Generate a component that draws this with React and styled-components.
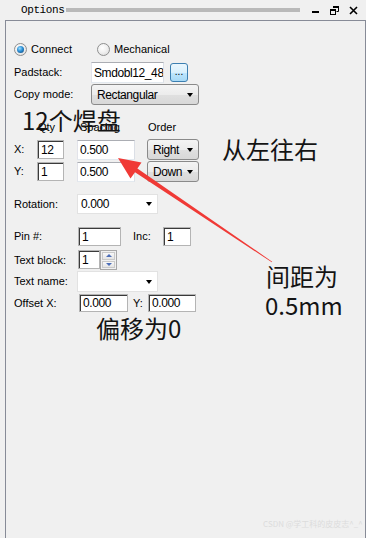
import React from "react";
import styled, { createGlobalStyle, css } from "styled-components";

const GlobalStyle = createGlobalStyle`
  html, body {
    margin: 0;
    padding: 0;
    background: #f0f0f0;
  }
  body {
    font-family: "Liberation Sans", Arial, sans-serif;
    font-size: 11px;
    color: #000;
  }
`;

const Window = styled.div`
  position: relative;
  width: 366px;
  height: 538px;
  overflow: hidden;
  background: #f0f0f0;
  display: flex;
  flex-direction: column;
`;

/* title bar */
const TitleBar = styled.div`
  height: 20px;
  flex: none;
  display: flex;
  align-items: center;
  padding-left: 21px;
  box-sizing: border-box;
`;

const Title = styled.span`
  font-family: "Liberation Mono", "Courier New", monospace;
  font-size: 11px;
  letter-spacing: -0.4px;
  line-height: 1;
`;

const Grip = styled.div`
  width: 234px;
  height: 4px;
  margin-left: 2px;
  background: #b9b9b9;
`;

const WinButtons = styled.div`
  display: flex;
  align-items: center;
  gap: 10px;
  margin-left: 12px;
  svg {
    display: block;
  }
`;

/* options panel */
const Panel = styled.div`
  flex: 1;
  width: 361px;
  margin-left: 5px;
  box-sizing: border-box;
  border: 1px solid #878b97;
  border-bottom: none;
  padding: 19px 8px 0 8px;
`;

const Row = styled.div`
  display: flex;
  align-items: ${(p) => (p.$top ? "flex-start" : "center")};
  height: ${(p) => p.$h}px;
  margin-top: ${(p) => p.$mt || 0}px;
`;

const Label = styled.span`
  flex: none;
  width: ${(p) => p.$w}px;
  margin-left: ${(p) => p.$ml || 0}px;
  align-self: center;
  white-space: nowrap;
  line-height: 1;
`;

const RadioItem = styled.label`
  display: flex;
  align-items: center;
  gap: 4px;
  width: ${(p) => p.$w}px;
  flex: none;
`;

const RadioDot = styled.span`
  width: 13px;
  height: 13px;
  box-sizing: border-box;
  border-radius: 50%;
  border: 1px solid #8e8f8f;
  background: radial-gradient(circle at 40% 35%, #ffffff 0%, #f1f1f1 45%, #d6d6d6 100%);
  display: flex;
  align-items: center;
  justify-content: center;
  ${(p) =>
    p.$on &&
    css`
      &::after {
        content: "";
        width: 7px;
        height: 7px;
        border-radius: 50%;
        background: radial-gradient(circle at 40% 35%, #9fe0ff 0%, #2b8fd6 45%, #0d3c6b 100%);
      }
    `}
`;

const TextBox = styled.div`
  flex: none;
  box-sizing: border-box;
  width: ${(p) => p.$w}px;
  height: ${(p) => p.$h}px;
  margin-left: ${(p) => p.$ml || 0}px;
  background: #fff;
  display: flex;
  align-items: center;
  padding-left: 2px;
  overflow: hidden;
  white-space: nowrap;
  font-size: 12px;
  letter-spacing: -0.4px;
  ${(p) =>
    p.$sunken
      ? css`
          border: 1px solid #b4b4b4;
          box-shadow: inset 1px 1px 0 #3a3a3a;
          padding-left: 3px;
        `
      : css`
          border: 1px solid;
          border-color: #abadb3 #dbdfe6 #e3e9ef #e2e3ea;
        `}
`;

const BrowseButton = styled.div`
  flex: none;
  width: 18px;
  height: 19px;
  margin-left: 6px;
  box-sizing: border-box;
  border: 1px solid #3c7fb1;
  border-radius: 3px;
  background: linear-gradient(#eaf6fd 0%, #d9f0fc 50%, #bee6fd 51%, #a7d9f5 100%);
  display: flex;
  align-items: flex-end;
  justify-content: center;
  padding-bottom: 4px;
  font-size: 10px;
  line-height: 1;
`;

const Caret = styled.span`
  flex: none;
  width: 0;
  height: 0;
  border-left: 3.5px solid transparent;
  border-right: 3.5px solid transparent;
  border-top: 4px solid #000;
`;

const Select = styled.div`
  flex: none;
  box-sizing: border-box;
  width: ${(p) => p.$w}px;
  height: ${(p) => p.$h}px;
  margin-left: ${(p) => p.$ml || 0}px;
  display: flex;
  align-items: center;
  justify-content: space-between;
  padding: 0 5px 0 ${(p) => (p.$button ? 5 : 3)}px;
  font-size: 12px;
  letter-spacing: -0.4px;
  ${(p) =>
    p.$button
      ? css`
          border: 1px solid #8a8a8a;
          border-radius: 3px;
          background: linear-gradient(#f4f4f4 0%, #ececec 50%, #e0e0e0 51%, #d8d8d8 100%);
        `
      : css`
          border: 1px solid #e2e2e2;
          background: #fff;
        `}
`;

const Spinner = styled.div`
  flex: none;
  width: 17px;
  height: 20px;
  box-sizing: border-box;
  border: 1px solid #a7a7a7;
  background: #f0f0f0;
  display: flex;
  flex-direction: column;
  gap: 1px;
  padding: 1px;
`;

const SpinButton = styled.div`
  flex: 1;
  border: 1px solid #c9c9c9;
  background: linear-gradient(#f8f8f8, #e4e4e4);
  display: flex;
  align-items: center;
  justify-content: center;
  &::after {
    content: "";
    border-left: 3px solid transparent;
    border-right: 3px solid transparent;
    ${(p) =>
      p.$up
        ? css`
            border-bottom: 3px solid #4b6db7;
          `
        : css`
            border-top: 3px solid #4b6db7;
          `}
  }
`;

/* annotations drawn on top of the screenshot */
const Note = styled.span`
  position: absolute;
  left: ${(p) => p.$x}px;
  top: ${(p) => p.$y}px;
  font-family: "Noto Sans CJK SC", "Noto Sans", sans-serif;
  font-size: 24px;
  line-height: 30px;
  color: #141414;
  white-space: nowrap;
`;

const ArrowLayer = styled.svg`
  position: absolute;
  left: 0;
  top: 0;
  pointer-events: none;
`;

const Watermark = styled.span`
  position: absolute;
  left: 263px;
  top: 518px;
  font-family: "Noto Sans CJK SC", "Liberation Sans", sans-serif;
  font-size: 8px;
  color: #dcdcdc;
  white-space: nowrap;
`;

const App = () => {
  return (
    <Window>
      <GlobalStyle />
      <TitleBar>
        <Title>Options</Title>
        <Grip />
        <WinButtons>
          <svg width="8" height="8" viewBox="0 0 8 8">
            <rect x="0" y="5" width="7" height="2" fill="#000" />
          </svg>
          <svg width="9" height="9" viewBox="0 0 9 9">
            <path d="M3 0.5H8.5V5.5H6.5" fill="none" stroke="#000" />
            <rect x="3" y="0" width="6" height="2" fill="#000" />
            <rect x="0.5" y="3.5" width="5" height="5" fill="none" stroke="#000" />
            <rect x="0" y="3" width="6" height="2" fill="#000" />
          </svg>
          <svg width="9" height="9" viewBox="0 0 9 9">
            <path d="M1 1L8 8M8 1L1 8" stroke="#000" strokeWidth="1.6" />
          </svg>
        </WinButtons>
      </TitleBar>

      <Panel>
        <Row $h={18}>
          <RadioItem $w={83}>
            <RadioDot $on />
            Connect
          </RadioItem>
          <RadioItem $w={120}>
            <RadioDot />
            Mechanical
          </RadioItem>
        </Row>

        <Row $h={21} $mt={4}>
          <Label $w={77}>Padstack:</Label>
          <TextBox $w={73} $h={21}>
            Smdobl12_48
          </TextBox>
          <BrowseButton>...</BrowseButton>
        </Row>

        <Row $h={21} $mt={1}>
          <Label $w={77}>Copy mode:</Label>
          <Select $w={108} $h={21} $button>
            Rectangular
            <Caret />
          </Select>
        </Row>

        <Row $h={16} $mt={14}>
          <Label $w={24} />
          <Label $w={42}>Qty</Label>
          <Label $w={68}>Spacing</Label>
          <Label $w={50}>Order</Label>
        </Row>

        <Row $h={21} $mt={4}>
          <Label $w={23}>X:</Label>
          <TextBox $w={27} $h={19} $sunken>
            12
          </TextBox>
          <TextBox $w={58} $h={20} $ml={13}>
            0.500
          </TextBox>
          <Select $w={52} $h={21} $ml={12} $button>
            Right
            <Caret />
          </Select>
        </Row>

        <Row $h={21} $mt={1}>
          <Label $w={23}>Y:</Label>
          <TextBox $w={27} $h={19} $sunken>
            1
          </TextBox>
          <TextBox $w={58} $h={20} $ml={13}>
            0.500
          </TextBox>
          <Select $w={52} $h={21} $ml={12} $button>
            Down
            <Caret />
          </Select>
        </Row>

        <Row $h={20} $mt={12}>
          <Label $w={63}>Rotation:</Label>
          <Select $w={81} $h={20}>
            0.000
            <Caret />
          </Select>
        </Row>

        <Row $h={19} $mt={13}>
          <Label $w={64}>Pin #:</Label>
          <TextBox $w={43} $h={19} $sunken>
            1
          </TextBox>
          <Label $w={30} $ml={12}>
            Inc:
          </Label>
          <TextBox $w={28} $h={19} $sunken>
            1
          </TextBox>
        </Row>

        <Row $h={20} $mt={4} $top>
          <Label $w={64}>Text block:</Label>
          <TextBox $w={22} $h={19} $sunken>
            1
          </TextBox>
          <Spinner>
            <SpinButton $up />
            <SpinButton />
          </Spinner>
        </Row>

        <Row $h={21} $mt={1}>
          <Label $w={63}>Text name:</Label>
          <Select $w={81} $h={21}>
            <span />
            <Caret />
          </Select>
        </Row>

        <Row $h={18} $mt={2}>
          <Label $w={65}>Offset X:</Label>
          <TextBox $w={49} $h={18} $sunken>
            0.000
          </TextBox>
          <Label $w={15} $ml={5}>
            Y:
          </Label>
          <TextBox $w={48} $h={18} $sunken>
            0.000
          </TextBox>
        </Row>
      </Panel>

      <ArrowLayer width="366" height="538" viewBox="0 0 366 538">
        <polygon
          points="118,158 141.5,162.5 137.4,168.4 272.2,261.7 271.8,262.3 135,172.2 130.5,178.5"
          fill="#f03a36"
        />
      </ArrowLayer>

      <Note $x={22} $y={105}>12个焊盘</Note>
      <Note $x={222} $y={134}>从左往右</Note>
      <Note $x={266} $y={261}>间距为</Note>
      <Note $x={265} $y={290}>0.5mm</Note>
      <Note $x={96} $y={313}>偏移为0</Note>
      <Watermark>CSDN @学工科的皮皮志^_^</Watermark>
    </Window>
  );
};

export default App;
